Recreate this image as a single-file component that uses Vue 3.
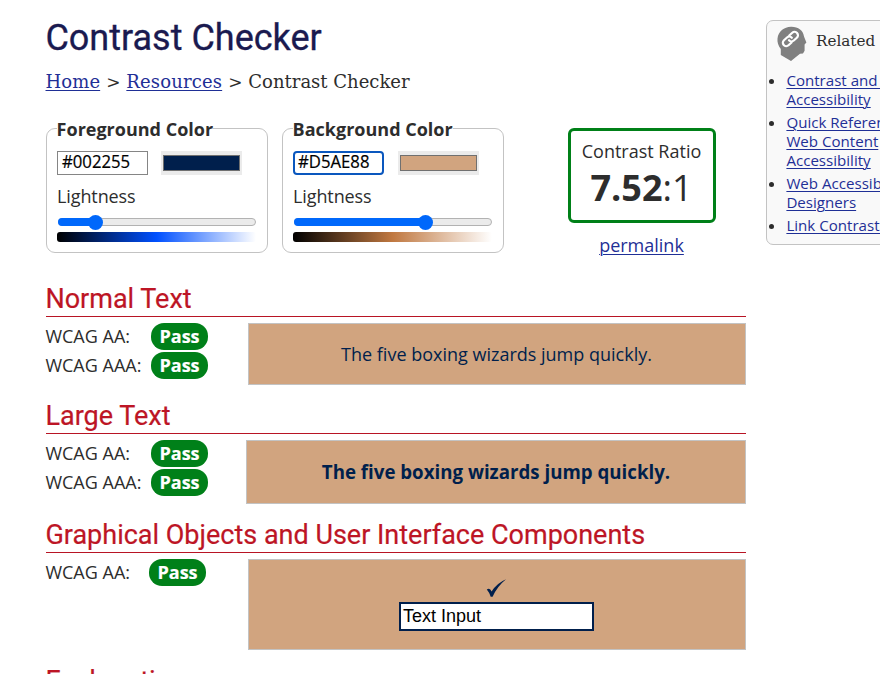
<script setup>
const colors = [
  { label: 'Foreground Color', id: 'fg', hex: '#002255', pos: 96 - 58 },
  { label: 'Background Color', id: 'bg', hex: '#D5AE88', pos: 426 - 294, focused: true },
]
const sentence = 'The five boxing wizards jump quickly.'
const related = [
  ['Contrast and Color', 'Accessibility'],
  ['Quick Reference:', 'Web Content', 'Accessibility'],
  ['Web Accessibility for', 'Designers'],
  ['Link Contrast Checker'],
]
</script>

<template>
  <div class="page">
    <main>
      <h1><span>Contrast Checker</span></h1>
      <nav><a class="home">Home</a><i>&gt;</i><a class="res">Resources</a><i>&gt;</i><span>Contrast Checker</span></nav>
      <div class="controls">
        <section v-for="c in colors" :key="c.id" class="picker" :class="c.id">
          <h3><span>{{ c.label }}</span></h3>
          <div class="fields">
            <div class="hex" :class="{ focused: c.focused }"><span>{{ c.hex }}</span></div>
            <div class="swatch"><div></div></div>
          </div>
          <label>Lightness</label>
          <div class="slider">
            <div class="fill" :style="{ width: c.pos + 'px' }"></div>
            <div class="thumb"></div>
          </div>
          <div class="ramp"></div>
        </section>
        <div class="result">
          <div class="ratio">
            <p>Contrast Ratio</p>
            <div class="value"><b>7.52</b>:1</div>
          </div>
          <a>permalink</a>
        </div>
      </div>

      <section class="check normal">
        <h2>Normal Text</h2>
        <div class="row">
          <div class="levels">
            <div><span>WCAG AA:</span><b>Pass</b></div>
            <div><span>WCAG AAA:</span><b>Pass</b></div>
          </div>
          <div class="sample">{{ sentence }}</div>
        </div>
      </section>
      <section class="check large">
        <h2>Large Text</h2>
        <div class="row">
          <div class="levels">
            <div><span>WCAG AA:</span><b>Pass</b></div>
            <div><span>WCAG AAA:</span><b>Pass</b></div>
          </div>
          <div class="sample">{{ sentence }}</div>
        </div>
      </section>
      <section class="check graphic">
        <h2>Graphical Objects and User Interface Components</h2>
        <div class="row">
          <div class="levels">
            <div><span>WCAG AA:</span><b>Pass</b></div>
          </div>
          <div class="sample">
            <svg width="20" height="19" viewBox="0 0 20 19"><path d="M.8 10.6Q3.8 8.4 5.6 12.4Q11 4 20 .2Q11 7.5 6.6 17.8H4.7Q3.2 13.3.8 10.6Z" /></svg>
            <div class="textinput">Text Input</div>
          </div>
        </div>
      </section>
      <section class="check"><h2>Explanation</h2></section>
    </main>
    <aside>
      <header>
        <svg width="31" height="36" viewBox="0 0 31 36">
          <path fill="#808080" d="M14 .8C21 .6 26.4 4.6 27 10.5L29.4 16.4 27.6 18.6 27.6 24.8 26 27.4 23 27.8 14 35 3.8 29V23C1.2 20 .1 16 .5 12.6 1.2 5.5 7 1 14 .8Z" />
          <g transform="translate(13.4 13) rotate(-42)" fill="none" stroke="#fff" stroke-width="2.2" stroke-linecap="round">
            <path d="M-1.5 3.4H-5.6A3.4 3.4 0 0 1-5.6-3.4H-1.5A3.4 3.4 0 0 1 1.9 0" />
            <path d="M1.5-3.4H5.6A3.4 3.4 0 0 1 5.6 3.4H1.5A3.4 3.4 0 0 1-1.9 0" />
          </g>
        </svg>
        <span>Related Resources</span>
      </header>
      <ul>
        <li v-for="item in related" :key="item[0]">
          <a><template v-for="(line, n) in item" :key="n"><br v-if="n">{{ line }}</template></a>
        </li>
      </ul>
    </aside>
  </div>
</template>

<style>
body { background: #fff; overflow: hidden; }
</style>

<style scoped>
* { box-sizing: border-box; }
h1, h2, h3, p, ul { margin: 0; padding: 0; font-weight: 400; }
.page { width: 880px; height: 674px; overflow: hidden; display: flex; gap: 20px; padding-left: 46px; font: 18px "Open Sans", sans-serif; color: #2d2d2d; white-space: nowrap; }
main { width: 700px; flex: none; }
a { color: #1f2f96; text-decoration: underline; text-decoration-thickness: 1px; text-underline-offset: 2px; }
h1 { font: 36px/42px Roboto, sans-serif; color: #1a1a50; padding-top: 17px; text-indent: -.6px; -webkit-text-stroke: .3px #1a1a50; }
nav { display: flex; font: 18px/24px "DejaVu Serif", serif; margin-top: 11px; height: 24px; text-indent: -.5px; }
nav .home { letter-spacing: .1px; }
nav .res { letter-spacing: .15px; }
nav i { font-style: normal; width: 26.7px; text-align: center; font-size: 17px; }
.controls { display: flex; margin-top: 34px; height: 125px; }
.picker { width: 222px; height: 125px; margin-right: 14px; border: 1px solid #c3c3c3; border-radius: 9px; padding: 0 10px; }
h3 { font-size: 18px; font-weight: 700; line-height: 24px; height: 24px; margin-top: -12px; margin-bottom: 10px; text-indent: -.4px; }
h3 span { background: #fff; }
.fields { display: flex; height: 24px; gap: 13px; }
.hex { width: 91px; height: 24px; border: 1px solid #858585; padding-left: 3.5px; color: #000; font: 17.5px/19px "Open Sans", sans-serif; }
.hex span { display: inline-block; transform: scaleX(.955); transform-origin: 0 50%; -webkit-text-stroke: .2px #000; }
.hex.focused { border: 2px solid #0a57be; border-radius: 4px; padding-left: 3px; line-height: 17px; }
.swatch { width: 81px; height: 24px; padding: 4px 2px; background: #ebebeb; }
.swatch div { height: 16px; border: 1px solid #707070; background: #001f4c; }
.bg .swatch { margin-left: 1px; }
.bg .swatch div { background: #d1a47f; }
label { display: block; line-height: 24px; margin-top: 9px; height: 24px; letter-spacing: -.1px; }
.slider { display: flex; align-items: center; height: 8px; width: 198px; margin: 10px 0 6px 1px; border: 1px solid #b2b2b2; border-radius: 4px; background: #ebebeb; }
.fill { height: 8px; flex: none; margin-left: -1px; border-radius: 4px 0 0 4px; background: #0068fb; }
.thumb { width: 15px; height: 15px; flex: none; border-radius: 50%; margin: 0 0 0 -8px; background: #0068fb; }
.ramp { width: 199px; height: 10px; border-radius: 3px; background: linear-gradient(90deg, #000, #0050ff 50%, #fff); }
.bg .ramp { background: linear-gradient(90deg, #000, #c07840 50%, #fff); }
.result { width: 148px; margin-left: 50px; text-align: center; flex: none; }
.ratio { height: 95px; border: 3px solid #008018; border-radius: 6px; }
.ratio p { line-height: 24px; margin-top: 8px; text-indent: -1px; }
.value { font-size: 36px; line-height: 50px; text-indent: -1px; }
.result a { display: block; line-height: 24px; margin-top: 10px; text-indent: -1px; }
.check { height: 117px; }
.controls + .check { margin-top: 28px; }
.large { height: 119px; }
.graphic { height: 146px; }
h2 { font: 27px/35px Roboto, sans-serif; height: 36px; border-bottom: 1px solid #b81424; color: #bd1525; margin-bottom: 6px; padding-top: 1px; text-indent: -.6px; -webkit-text-stroke: .2px #bd1525; }
.row { display: flex; justify-content: space-between; align-items: flex-start; }
.levels div { display: flex; height: 29px; align-items: flex-start; line-height: 27px; }
.levels span { width: 105px; text-indent: -.6px; }
.levels b { width: 57px; height: 27px; border-radius: 13px; background: #008019; color: #fff; text-align: center; -webkit-text-stroke: .2px #fff; }
.graphic .levels span { width: 103px; }
.sample { width: 498px; height: 62px; border: 1px solid #c3c3c3; background: #d1a47f; color: #001f4c; display: flex; align-items: center; justify-content: center; text-indent: -1px; }
.large .sample { width: 500px; height: 64px; font-weight: 700; font-size: 18.7px; padding-bottom: 1px; text-indent: 0; }
.graphic .sample { height: 91px; flex-direction: column; justify-content: flex-start; padding: 19px 2px 0 0; }
.sample svg { fill: #001f4c; flex: none; }
.textinput { width: 195px; height: 29px; margin-top: 4px; border: 2px solid #001f4c; background: #fff; color: #000; font: 18px/24px "Liberation Sans", sans-serif; padding-left: 3.5px; }
aside { width: 234px; height: 225px; flex: none; margin-top: 20px; border: 1px solid #c3c3c3; border-radius: 7px; background: #f9f9f9; }
aside header { display: flex; gap: 8px; padding: 5px 0 0 10px; height: 50px; font: 15.2px/31px "DejaVu Serif", serif; }
aside ul { padding-left: 19.4px; font-size: 15.1px; line-height: 19px; }
aside li { margin-bottom: 4px; }
</style>
